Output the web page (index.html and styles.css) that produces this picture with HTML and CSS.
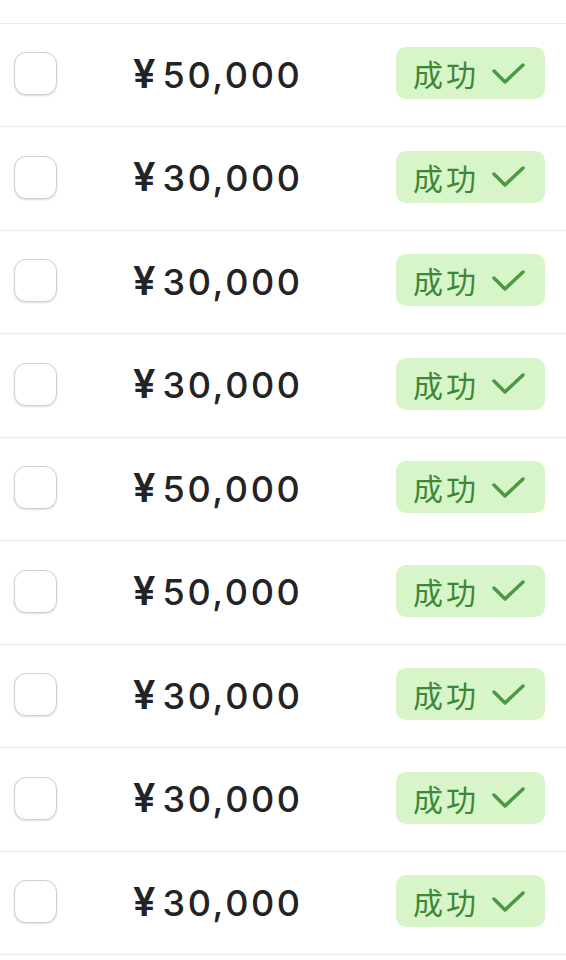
FILE: index.html
```html
<!DOCTYPE html>
<html lang="zh-CN">
<head>
    <meta charset="UTF-8">
    <meta name="viewport" content="width=device-width, initial-scale=1.0">
    <title>交易记录</title>
    <link rel="stylesheet" href="styles.css">
</head>
<body>

<div class="list">
    <div class="row"></div>
    <div class="row">
        <span class="check"></span>
        <span class="amount"><span class="yen">¥</span>50,000</span>
        <span class="badge">成功<svg viewBox="0 0 35 25"><path d="M3 10 L14 21 L32 4"/></svg></span>
    </div>
    <div class="row">
        <span class="check"></span>
        <span class="amount"><span class="yen">¥</span>30,000</span>
        <span class="badge">成功<svg viewBox="0 0 35 25"><path d="M3 10 L14 21 L32 4"/></svg></span>
    </div>
    <div class="row">
        <span class="check"></span>
        <span class="amount"><span class="yen">¥</span>30,000</span>
        <span class="badge">成功<svg viewBox="0 0 35 25"><path d="M3 10 L14 21 L32 4"/></svg></span>
    </div>
    <div class="row">
        <span class="check"></span>
        <span class="amount"><span class="yen">¥</span>30,000</span>
        <span class="badge">成功<svg viewBox="0 0 35 25"><path d="M3 10 L14 21 L32 4"/></svg></span>
    </div>
    <div class="row">
        <span class="check"></span>
        <span class="amount"><span class="yen">¥</span>50,000</span>
        <span class="badge">成功<svg viewBox="0 0 35 25"><path d="M3 10 L14 21 L32 4"/></svg></span>
    </div>
    <div class="row">
        <span class="check"></span>
        <span class="amount"><span class="yen">¥</span>50,000</span>
        <span class="badge">成功<svg viewBox="0 0 35 25"><path d="M3 10 L14 21 L32 4"/></svg></span>
    </div>
    <div class="row">
        <span class="check"></span>
        <span class="amount"><span class="yen">¥</span>30,000</span>
        <span class="badge">成功<svg viewBox="0 0 35 25"><path d="M3 10 L14 21 L32 4"/></svg></span>
    </div>
    <div class="row">
        <span class="check"></span>
        <span class="amount"><span class="yen">¥</span>30,000</span>
        <span class="badge">成功<svg viewBox="0 0 35 25"><path d="M3 10 L14 21 L32 4"/></svg></span>
    </div>
    <div class="row">
        <span class="check"></span>
        <span class="amount"><span class="yen">¥</span>30,000</span>
        <span class="badge">成功<svg viewBox="0 0 35 25"><path d="M3 10 L14 21 L32 4"/></svg></span>
    </div>
</div>

</body>
</html>
```

FILE: styles.css
```css
body {
    margin: 0;
    background-color: #fff;
    font-family: Inter, "Noto Sans CJK SC", sans-serif;
    overflow: hidden;
}

.list {
    margin-top: -80px;
}

.row {
    box-sizing: border-box;
    height: 103.5px;
    display: flex;
    align-items: center;
    padding: 0 21px 0 14px;
    border-bottom: 1.5px solid #ebebeb;
}

.check {
    box-sizing: border-box;
    width: 43px;
    height: 43px;
    border: 1.5px solid #cfcfd2;
    border-radius: 12px;
    background-color: #fff;
    box-shadow: 0 1px 2px rgba(0, 0, 0, 0.14);
    margin-top: -2px;
}

.amount {
    margin-left: 76px;
    flex: 1;
    font-size: 36px;
    font-weight: 500;
    letter-spacing: 2.6px;
    color: #232325;
    margin-top: -3px;
}

.yen {
    font-size: 40px;
    font-weight: 600;
    letter-spacing: 0;
    margin-right: 7px;
}

.badge {
    box-sizing: border-box;
    width: 149px;
    height: 52px;
    display: flex;
    align-items: center;
    padding-left: 17px;
    border-radius: 10px;
    background-color: #d7f5c9;
    color: #3c8837;
    font-family: "Noto Sans CJK SC", sans-serif;
    font-size: 30px;
    letter-spacing: 3px;
    margin-top: -3px;
}

.badge svg {
    width: 35px;
    height: 25px;
    margin-left: 12px;
    fill: none;
    stroke: #4a9a42;
    stroke-width: 3.5;
    stroke-linecap: round;
    stroke-linejoin: round;
}
```
